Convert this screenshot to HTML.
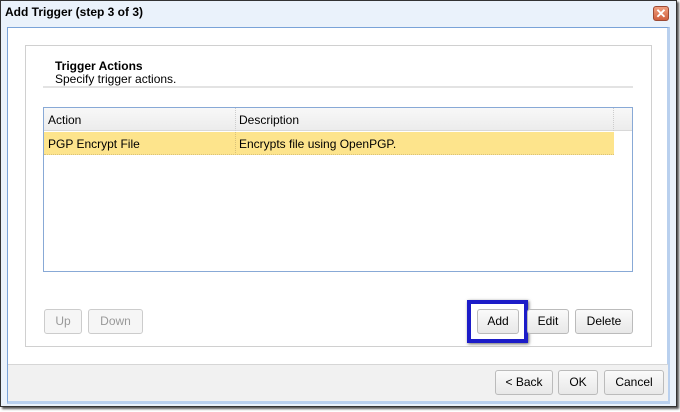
<!DOCTYPE html><html><head><style>
body{margin:0;width:680px;height:412px;background:#fff;position:relative;overflow:hidden;font-family:"Liberation Sans",sans-serif;font-size:12px;color:#000}
.a{position:absolute;box-sizing:border-box}
.btn{position:absolute;box-sizing:border-box;height:25px;border:1px solid #bbb;border-radius:3px;background:linear-gradient(#fafafa,#e8e8e8);text-align:center;line-height:23px;font-size:12px}
.dis{color:#999;border-color:#ccc;background:#f6f6f6}
</style></head><body>
<div class="a" style="left:0;top:0;width:677px;height:407px;border:1px solid #333;background:#eaf2fb;box-shadow:2px 2px 2px #555"></div>
<div class="a" style="left:5px;top:5px;font-weight:bold;font-size:12px">Add Trigger (step 3 of 3)</div>
<div class="a" style="left:653px;top:6px;width:16px;height:15px;border:1px solid #9c4a34;border-radius:3px;background:linear-gradient(#f0a080,#d0603f);color:#fff;font-weight:bold;text-align:center;line-height:13px;font-size:13px">✕</div>
<div class="a" style="left:7px;top:27px;width:663px;height:377px;border:1px solid #7aa3d8;border-right:3px solid #b9d0ee;border-bottom:3px solid #b9d0ee;background:#fff"></div>
<div class="a" style="left:8px;top:364px;width:660px;height:37px;background:#f1f1f1;border-top:1px solid #d6d6d6"></div>
<div class="a" style="left:25px;top:45px;width:627px;height:302px;border:1px solid #d0d0d0"></div>
<div class="a" style="left:55px;top:59px;font-weight:bold">Trigger Actions</div>
<div class="a" style="left:55px;top:72px">Specify trigger actions.</div>
<div class="a" style="left:43px;top:86px;width:590px;height:2px;background:#e3e3e3"></div>
<div class="a" style="left:43px;top:107px;width:590px;height:165px;border:1px solid #88a9d6"></div>
<div class="a" style="left:44px;top:108px;width:588px;height:23px;background:linear-gradient(#f8f8f8,#ececec);border-bottom:1px solid #d8d8d8"></div>
<div class="a" style="left:235px;top:108px;width:1px;height:23px;border-left:1px dotted #ccc"></div>
<div class="a" style="left:613px;top:108px;width:1px;height:23px;border-left:1px dotted #ccc"></div>
<div class="a" style="left:48px;top:113px">Action</div>
<div class="a" style="left:239px;top:113px">Description</div>
<div class="a" style="left:44px;top:132px;width:570px;height:23px;background:#fde48c;border-bottom:1px dotted #d9c27a"></div>
<div class="a" style="left:235px;top:132px;width:1px;height:23px;border-left:1px dotted #d9c27a"></div>
<div class="a" style="left:48px;top:137px">PGP Encrypt File</div>
<div class="a" style="left:239px;top:137px">Encrypts file using OpenPGP.</div>
<div class="btn dis" style="left:44px;top:309px;width:38px">Up</div>
<div class="btn dis" style="left:88px;top:309px;width:55px">Down</div>
<div class="a" style="left:467px;top:300px;width:61px;height:43px;border:4px solid #1c1cc8;box-shadow:1px 1px 3px #666"></div>
<div class="btn" style="left:477px;top:309px;width:42px">Add</div>
<div class="btn" style="left:527px;top:309px;width:42px">Edit</div>
<div class="btn" style="left:575px;top:309px;width:58px">Delete</div>
<div class="btn" style="left:495px;top:370px;width:58px">&lt; Back</div>
<div class="btn" style="left:558px;top:370px;width:40px">OK</div>
<div class="btn" style="left:604px;top:370px;width:60px">Cancel</div>
</body></html>
